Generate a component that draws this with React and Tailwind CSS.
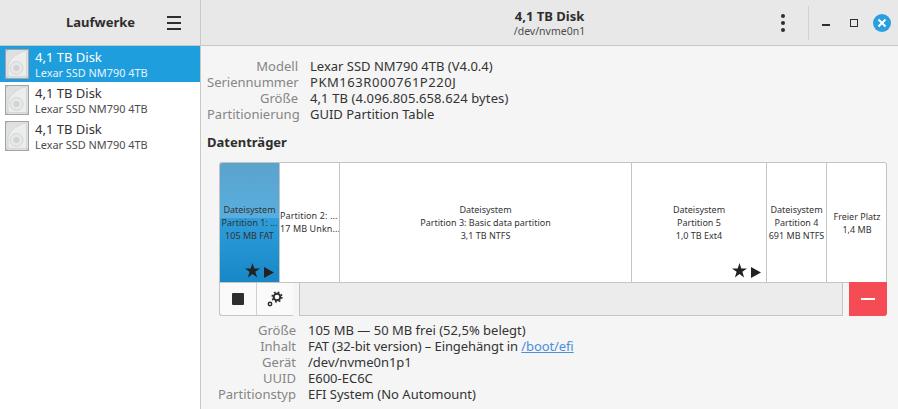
const font = "font-['Noto_Sans','Open_Sans',sans-serif]";

const disks = [{ selected: true }, {}, {}];

const driveRows = [
  ['Modell', 'Lexar SSD NM790 4TB (V4.0.4)'],
  ['Seriennummer', 'PKM163R000761P220J', 'tracking-[0.55px]'],
  ['Größe', '4,1 TB (4.096.805.658.624 bytes)', 'tracking-[0.1px]'],
  ['Partitionierung', 'GUID Partition Table'],
];

const volumeRows = [
  ['Größe', '105 MB — 50 MB frei (52,5% belegt)'],
  ['Inhalt', null, 'tracking-[-0.1px]'],
  ['Gerät', '/dev/nvme0n1p1'],
  ['UUID', 'E600-EC6C'],
  ['Partitionstyp', 'EFI System (No Automount)'],
];

const partitions = [
  { width: 'w-[60px]', lines: ['Dateisystem', 'Partition 1: ...', '105 MB FAT'], selected: true, icons: true },
  { width: 'w-[60px]', lines: ['Partition 2: ...', '17 MB Unkn...'], tight: true },
  { width: 'w-[292px]', lines: ['Dateisystem', 'Partition 3: Basic data partition', '3,1 TB NTFS'] },
  { width: 'w-[135px]', lines: ['Dateisystem', 'Partition 5', '1,0 TB Ext4'], icons: true },
  { width: 'w-[60px]', lines: ['Dateisystem', 'Partition 4', '691 MB NTFS'] },
  { width: 'w-[60px]', lines: ['Freier Platz', '1,4 MB'], last: true },
];

const DiskIcon = () => (
  <svg width="24" height="30" viewBox="0 0 24 30" className="shrink-0">
    <rect x="0.5" y="0.5" width="23" height="29" fill="#dfe0e0" stroke="#9fa3a5" />
    <path d="M21.5 3 V25.5 Q21.5 27.5 19.5 27.5 H5 Q3 27.5 3 25.5 V18 C3 11 11 5 18.5 2.2 Q21.5 1.5 21.5 3 Z" fill="#eceded" stroke="#d6d6d6" />
    <circle cx="11.5" cy="19" r="6.5" fill="#e6e7e7" stroke="#d4d4d4" />
    <circle cx="11.5" cy="19" r="3" fill="#d2d3d3" />
    <circle cx="2" cy="2" r="0.7" fill="#b5b5b5" />
    <circle cx="2" cy="28" r="0.7" fill="#b5b5b5" />
    <circle cx="22" cy="28" r="0.7" fill="#b5b5b5" />
  </svg>
);

const InfoRows = ({ rows, labelWidth }) => (
  <div className={`grid ${labelWidth} gap-x-3 text-[13px] leading-4`}>
    {rows.map(([label, value, tracking]) => (
      <div key={label} className="contents">
        <span className="text-right text-[#858585]">{label}</span>
        <span className={`text-[#333333] whitespace-nowrap ${tracking ?? ''}`}>
          {value ?? (
            <>
              FAT (32-bit version) – Eingehängt in <span className="text-[#4a90d9] underline">/boot/efi</span>
            </>
          )}
        </span>
      </div>
    ))}
  </div>
);

const Partition = ({ p }) => (
  <div
    className={`${p.width} relative shrink-0 overflow-hidden flex flex-col justify-center text-[9px] leading-[13px] text-[#333333] whitespace-nowrap ${
      p.tight ? 'items-start tracking-[0.1px] pb-[2px]' : 'items-center'
    } ${p.last ? '' : 'border-r border-[#c4c4c4]'} ${
      p.selected ? 'bg-[linear-gradient(to_bottom,#5ba3cd_0%,#58aede_46%,#2f9edb_46.5%,#1787c6_100%)]' : 'bg-white'
    }`}
  >
    {p.lines.map((l) => (
      <span key={l}>{l}</span>
    ))}
    {p.icons && (
      <div className="absolute right-[5px] bottom-[4px] flex items-end gap-[4px]">
        <svg width="15" height="15" viewBox="0 0 15 15" fill="#222222">
          <path d="M7.5 0 L9.3 5.4 H15 L10.4 8.8 L12.1 14.4 L7.5 11 L2.9 14.4 L4.6 8.8 L0 5.4 H5.7 Z" />
        </svg>
        <svg width="10" height="11" viewBox="0 0 10 11" fill="#222222">
          <path d="M0 0 L10 5.5 L0 11 Z" />
        </svg>
      </div>
    )}
  </div>
);

export default function App() {
  return (
    <div className={`${font} w-[898px] h-[409px] flex overflow-hidden bg-[#f5f5f5] text-[#333333]`}>
      {/* Left: drive list */}
      <div className="w-[201px] shrink-0 flex flex-col border-r border-[#c8c8c8] bg-white">
        <div className="h-[46px] shrink-0 flex items-center border-b border-[#c8c8c8] bg-[#e8e8e8] pl-[66px] pr-[19px] justify-between">
          <span className="text-[13px] font-bold text-[#2e2e2e]">Laufwerke</span>
          <div className="flex flex-col gap-[4px]">
            <div className="w-[14px] h-[2px] bg-[#2e2e2e]" />
            <div className="w-[14px] h-[2px] bg-[#2e2e2e]" />
            <div className="w-[14px] h-[2px] bg-[#2e2e2e]" />
          </div>
        </div>
        {disks.map((d, i) => (
          <div
            key={i}
            className={`h-9 flex items-center gap-[6px] pl-[5px] ${d.selected ? 'bg-[#1f9ede] text-white' : 'text-[#333333]'}`}
          >
            <DiskIcon />
            <div className="flex flex-col">
              <span className="text-[13px] leading-[17px]">4,1 TB Disk</span>
              <span className={`text-[10.9px] leading-[14px] ${d.selected ? 'text-[#e6f3fb]' : 'text-[#4c4c4c]'}`}>
                Lexar SSD NM790 4TB
              </span>
            </div>
          </div>
        ))}
      </div>

      {/* Right: drive details */}
      <div className="flex-1 flex flex-col min-w-0">
        <div className="h-[46px] shrink-0 flex items-center border-b border-[#c8c8c8] bg-[#e8e8e8]">
          <div className="flex-1 flex flex-col items-center pl-[117px]">
            <span className="text-[13px] font-bold leading-4 text-[#2e2e2e]">4,1 TB Disk</span>
            <span className="text-[10.5px] leading-[14px] text-[#4c4c4c]">/dev/nvme0n1</span>
          </div>
          <div className="flex flex-col gap-[3px] mr-[23px]">
            <div className="w-1 h-1 rounded-full bg-[#2e2e2e]" />
            <div className="w-1 h-1 rounded-full bg-[#2e2e2e]" />
            <div className="w-1 h-1 rounded-full bg-[#2e2e2e]" />
          </div>
          <div className="w-px h-[34px] bg-[#d2d2d2] mr-[13px]" />
          <div className="w-2 border-t-2 border-[#2e2e2e] mt-[4px] mr-[20px]" />
          <div className="w-2 h-2 border border-[#2e2e2e] mr-[15px]" />
          <div className="w-[18px] h-[18px] rounded-full bg-[#2a9fe0] flex items-center justify-center mr-[7px]">
            <svg width="10" height="10" viewBox="0 0 10 10">
              <path d="M1.5 1.5 L8.5 8.5 M8.5 1.5 L1.5 8.5" stroke="white" strokeWidth="2" />
            </svg>
          </div>
        </div>

        <div className="pt-[12px] pl-[6px]">
          <InfoRows rows={driveRows} labelWidth="grid-cols-[91px_1fr]" />
          <h2 className="mt-[12px] text-[13px] leading-4 font-bold text-[#2e2e2e]">Datenträger</h2>

          {/* Partition map */}
          <div className="mt-[12px] ml-[12px] w-[668px] h-[154px] flex flex-col">
            <div className="h-[120px] flex border border-b-0 border-[#c4c4c4] rounded-t-[3px] overflow-hidden">
              {partitions.map((p) => (
                <Partition key={p.lines.join()} p={p} />
              ))}
            </div>
            <div className="h-[34px] flex border-t border-[#c4c4c4]">
              <div className="w-[74px] flex border-l border-b border-[#c4c4c4] rounded-bl-[3px] bg-[#fafafa]">
                <div className="w-[37px] flex items-center justify-center border-r border-[#d0d0d0]">
                  <div className="w-3 h-3 rounded-[1px] bg-[#2e2e2e]" />
                </div>
                <div className="flex-1 flex items-center justify-center">
                  <svg width="16" height="16" viewBox="0 0 16 16" fill="none" stroke="#2e2e2e">
                    <circle cx="10" cy="6" r="3.3" strokeWidth="2" />
                    <circle cx="10" cy="6" r="4.9" strokeWidth="1.5" strokeDasharray="1.9 1.95" />
                    <circle cx="3" cy="13" r="1.7" strokeWidth="1.5" />
                  </svg>
                </div>
              </div>
              <div className="w-[6px]" />
              <div className="w-[544px] bg-[#ececec] border-l border-r border-b border-[#c4c4c4]" />
              <div className="w-[6px]" />
              <div className="flex-1 bg-[#f44b54] flex items-center justify-center rounded-br-[3px] -mt-px">
                <div className="w-[14px] h-[2px] bg-white" />
              </div>
            </div>
          </div>

          <div className="mt-[6px] ml-[6px]">
            <InfoRows rows={volumeRows} labelWidth="grid-cols-[83px_1fr]" />
          </div>
        </div>
      </div>
    </div>
  );
}
